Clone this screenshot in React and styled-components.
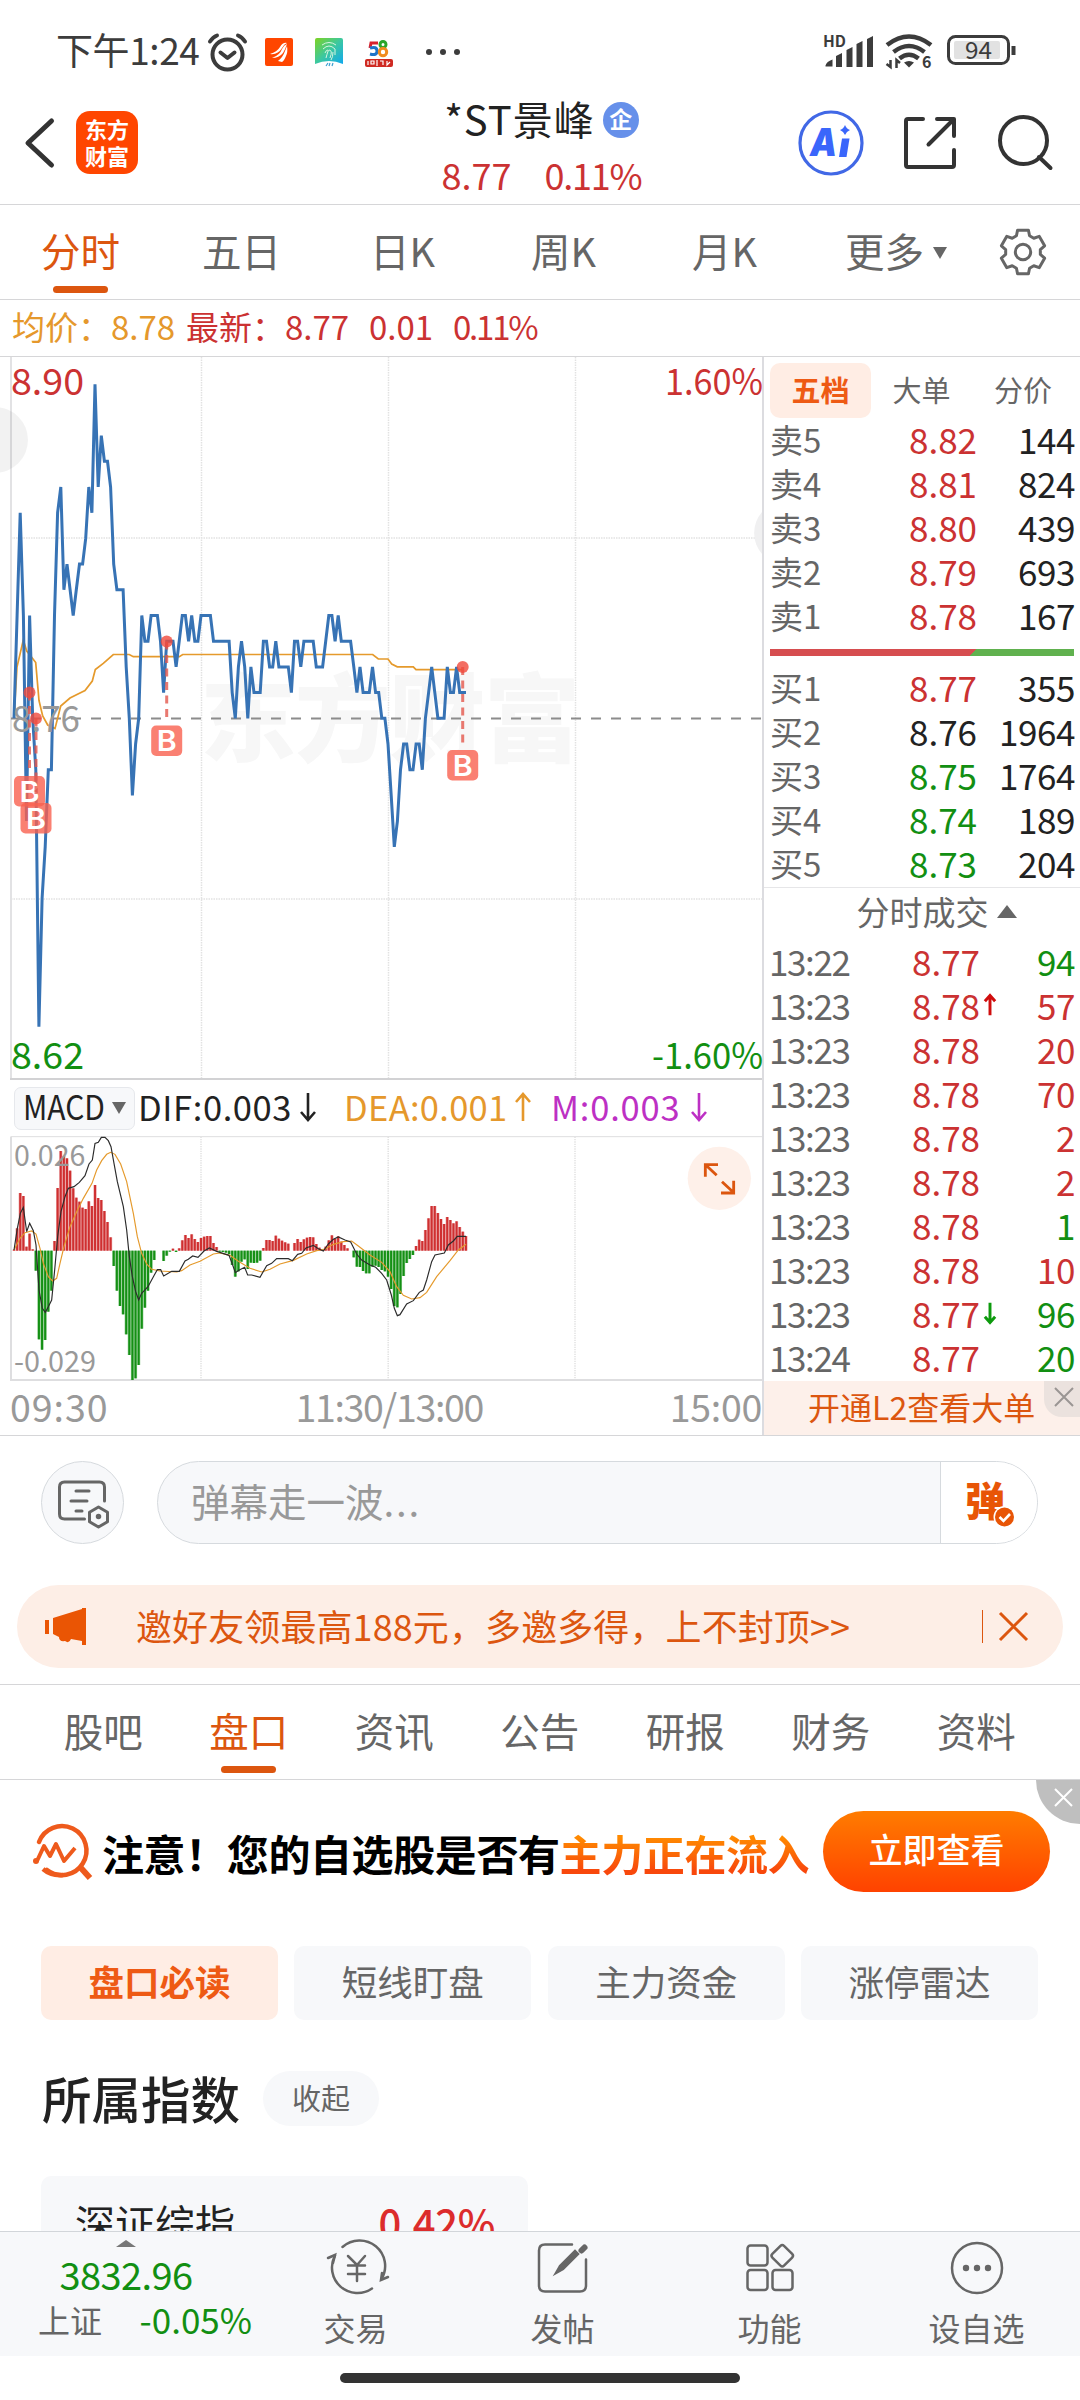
import React, { useState } from 'react';
import styled, { createGlobalStyle } from 'styled-components'

const RED = '#cb3232';
const GREEN = '#128f12';
const ORANGE = '#dc560f';
const GREY = '#666';
const LINE = '#d6d6d8';

const GlobalStyle = createGlobalStyle`
  * { box-sizing: border-box; }
  body {
    margin: 0;
    background: #fff;
    font-family: "Noto Sans CJK SC", "Noto Sans", sans-serif;
    color: #222;
  }
  svg { display: block; flex: none; overflow: visible; }
`

const Page = styled.div`
  width: 1080px;
  height: 2400px;
  overflow: hidden;
  display: flex;
  flex-direction: column;
  background: #fff;
`

const T = styled.span`
  font-size: ${p => p.$size || 36}px;
  color: ${p => p.$color || 'inherit'};
  font-weight: ${p => p.$weight || 400};
  letter-spacing: ${p => p.$ls || 0}px;
  line-height: 1;
  white-space: nowrap;
`

/* ---------- status bar ---------- */

const StatusBar = styled.div`
  height: 96px;
  padding: 8px 62px 0 56px;
  display: flex;
  align-items: center;
  color: #3c3c3c;
  flex: none;
`

const StatusText = styled(T)`
  width: 145px;
  margin-top: -6px;
`

const Spacer = styled.div`
  flex: 1;
`

const StatusIcons = () => (
  <svg width="260" height="48" viewBox="200 28 260 48" fill="none">
    <g stroke="#3c3c3c" strokeWidth="4" strokeLinecap="round">
      <circle cx="226.500" cy="54.500" r="15" />
      <path d="M219.500 52.500l7 5.500 7-5.500M209 41.500q3-4.500 7-6M244 41.500q-3-4.500-7-6" strokeLinejoin="round" />
    </g>
    <rect x="264" y="38" width="28" height="28" rx="2" fill="#ff4600" />
    <path d="M269 54q7-2 10-7 3-5 7-4-3 1-5 5-4 7-12 6zM271 58q8-3 10-9 2-4 5-5-2 6-4 9-4 5-11 5zM277 61q5-4 7-10l2-5q1 6-1 10-2 5-4 6z" fill="#fff" />
    <defs>
      <linearGradient id="fp" x1="0" y1="0" x2="1" y2="1">
        <stop offset="0" stopColor="#7ed321" />
        <stop offset="0.5" stopColor="#3cc8a0" />
        <stop offset="1" stopColor="#10a8ee" />
      </linearGradient>
    </defs>
    <path d="M316 38h24q2 0 2 2v24q-14-6-28 0V40q0-2 2-2z" fill="url(#fp)" />
    <path d="M321 45q7-5 14 0M322 49q6-6 12 0v6M325 58q2-8 3-8 4 0 1 8M324 53q1-3 3-3M332 52q0 5-2 8" stroke="#d8f5e0" strokeWidth="1" />
    <path d="M325 66l2-3M328 66l1-3M332 63l-1 3" stroke="#3a9fd0" strokeWidth="1.200" />
    <path d="M377 43h-7l-1 5" stroke="#d8212c" strokeWidth="3" />
    <path d="M369 48q7-2 7 3t-7 3" stroke="#1e73c8" strokeWidth="3" />
    <circle cx="382" cy="44.500" r="3" stroke="#2aa52a" strokeWidth="3" />
    <circle cx="382" cy="52" r="3.700" stroke="#f08c1e" strokeWidth="3" />
    <rect x="364" y="59" width="28" height="8" rx="2" fill="#cf2a22" />
    <path d="M367 61v4M370 61h3v3h-3zM376 60v6M379 61h3v4M386 61v4l3-3" stroke="#fff" strokeWidth="1.200" />
    <g fill="#3c3c3c">
      <circle cx="428" cy="52" r="3" />
      <circle cx="442" cy="52" r="3" />
      <circle cx="456" cy="52" r="3" />
    </g>
  </svg>
)

const SignalIcons = () => (
  <svg width="196" height="44" viewBox="824 32 196 44" fill="none">
    <text x="825" y="48.500" fontSize="15.500" fontWeight="700" fill="#3c3c3c" textLength="23" lengthAdjust="spacingAndGlyphs">HD</text>
    <g fill="#3c3c3c">
      <path d="M827.500 67.500q1-4 7-6v7h-7zM838 58l6-3v14h-6zM848.500 52l6-3v20h-6zM858.500 46l6-3v26h-6zM869 41l6-3v31h-6z" />
      <path d="M906 64.500q5-3 10 0l-5 5z" />
    </g>
    <g stroke="#3c3c3c" strokeWidth="4.500">
      <path d="M889 47q22-17 44 0M895.500 54q15.500-12 31 0M901.500 60.500q9.500-7.500 19 0" />
    </g>
    <path d="M892.500 62v7l-4-3M898.500 70v-8l3.500 3" stroke="#3c3c3c" strokeWidth="2.500" />
    <text x="924" y="70" fontSize="16" fontWeight="700" fill="#3c3c3c">6</text>
    <rect x="950.500" y="38.500" width="60" height="27" rx="7" stroke="#3c3c3c" strokeWidth="3" />
    <rect x="956" y="43" width="46" height="18" rx="2" fill="#e2e2e2" />
    <path d="M1015.500 48v9" stroke="#3c3c3c" strokeWidth="4" />
    <text x="967" y="61" fontSize="24" fill="#3c3c3c" textLength="27" lengthAdjust="spacingAndGlyphs">94</text>
  </svg>
)

/* ---------- header ---------- */

const Header = styled.header`
  height: 109px;
  flex: none;
  display: grid;
  grid-template-columns: 76px 62px 1fr 66px 134px 82px;
  grid-template-rows: 93px;
  align-items: center;
  border-bottom: 1px solid ${LINE};
`

const Logo = styled.div`
  width: 62px;
  height: 63px;
  border-radius: 14px;
  background: #ff4600;
  color: #fff;
  display: flex;
  flex-direction: column;
  align-items: center;
  justify-content: center;
  font-size: 22px;
  font-weight: 700;
  line-height: 27px;
  padding-bottom: 2px;
`

const TitleBlock = styled.div`
  height: 93px;
  display: flex;
  flex-direction: column;
  align-items: center;
  margin-left: 147px;
`

const TitleRow = styled.div`
  height: 44px;
  flex: none;
  display: flex;
  align-items: center;
  gap: 8px;
`

const Badge = styled.span`
  width: 36px;
  height: 36px;
  margin-top: 4px;
  border-radius: 50%;
  background: #6690ea;
  color: #fff;
  font-size: 23px;
  font-weight: 700;
  line-height: 33px;
  text-align: center;
`

const QuoteRow = styled.div`
  height: 58px;
  margin-top: 5px;
  flex: none;
  display: flex;
  align-items: center;
  gap: 33px;
  color: ${RED};
`

const BackIcon = () => (
  <svg width="76" height="64" viewBox="0 111 76 64" fill="none">
    <path d="M51.500 121L28 143l23.500 22" stroke="#333" strokeWidth="5" strokeLinecap="round" strokeLinejoin="round" />
  </svg>
)

const AiIcon = () => (
  <svg width="66" height="68" viewBox="798 109 66 68" fill="none">
    <circle cx="831" cy="143" r="31" stroke="#4168e6" strokeWidth="3.200" />
    <text x="810" y="156" fontSize="38" fontWeight="900" fontStyle="italic" fontFamily="Inter, sans-serif" fill="#3a66fb" textLength="27" lengthAdjust="spacingAndGlyphs">A</text>
    <path d="M842 138.500h7.500l-3 18.500h-7.500z" fill="#3a66fb" />
    <path d="M845 125q1.500 4 5 5-3.500 1.500-5 5-1.500-3.500-5-5 3.500-1 5-5z" fill="#3a66fb" />
  </svg>
)

const ShareIcon = () => (
  <svg width="134" height="64" viewBox="864 111 134 64" fill="none" stroke="#333" strokeWidth="4" strokeLinecap="round" strokeLinejoin="round">
    <path d="M923 119h-15q-2 0-2 2v44q0 2 2 2h44q2 0 2-2v-15" />
    <path d="M937 119h17v17M953 120l-24.500 24.500" />
  </svg>
)

const SearchIcon = () => (
  <svg width="56" height="64" viewBox="998 111 56 64" fill="none" stroke="#333" strokeWidth="4">
    <circle cx="1023.500" cy="140.500" r="23.500" />
    <path d="M1039 157l11.500 11" strokeLinecap="round" />
  </svg>
)

/* ---------- tabs ---------- */

const TabBar = styled.nav`
  height: ${p => p.$h}px;
  padding: 0 ${p => p.$pad || 0}px;
  flex: none;
  display: flex;
  border-top: ${p => (p.$ruled ? `1px solid ${LINE}` : 'none')};
  border-bottom: 1px solid ${LINE};
`

const Tab = styled.div`
  width: ${p => p.$w}px;
  display: flex;
  flex-direction: column;
  align-items: center;
  font-size: 39.5px;
  line-height: 90px;
  color: ${p => (p.$on ? ORANGE : GREY)};
  &::after {
    content: '';
    width: 55px;
    height: 7px;
    margin-top: -9px;
    border-radius: 4px;
    background: ${p => (p.$on ? ORANGE : 'transparent')};
  }
`

const MoreTab = styled.div`
  width: 178px;
  padding-left: 40px;
  display: flex;
  gap: 9px;
  font-size: 39.5px;
  line-height: 90px;
  color: ${GREY};

  i {
    margin-top: 42px;
  }
`

const Triangle = styled.i`
  width: 0;
  height: 0;
  border-left: ${p => p.$w / 2}px solid transparent;
  border-right: ${p => p.$w / 2}px solid transparent;
  ${p => (p.$up ? 'border-bottom' : 'border-top')}: ${p => p.$h}px solid ${p => p.$color || GREY};
`

const gearPath = () => {
  const pts = [];
  for (let i = 0; i < 6; i++) {
    [[-22, 17.5], [-14, 22.5], [14, 22.5], [22, 17.5]].forEach(([a, r]) => {
      const rad = ((i * 60 + a - 90) * Math.PI) / 180;
      pts.push(`${(24 + r * Math.cos(rad)).toFixed(2)} ${(24 + r * Math.sin(rad)).toFixed(2)}`)
    })
  }
  return `M${pts.join('L')}Z`;
}

const GearIcon = () => (
  <svg width="80" height="94" viewBox="-16 -23 80 94" fill="none" stroke="#666" strokeWidth="3">
    <path d={gearPath()} strokeLinejoin="round" />
    <circle cx="24" cy="24" r="7.700" />
  </svg>
)

/* ---------- price strip ---------- */

const PriceStrip = styled.div`
  height: 57px;
  padding: 0 0 3px 12px;
  flex: none;
  display: flex;
  align-items: center;
  border-bottom: 1px solid ${LINE};
`

const StripCell = styled.span`
  width: ${p => p.$w}px;
  font-size: 33px;
  line-height: 1;
  letter-spacing: ${p => p.$ls || 0}px;
  white-space: nowrap;
  color: ${p => p.$color || RED};
`

/* ---------- chart ---------- */

const Market = styled.section`
  height: 1079px;
  flex: none;
  display: flex;
  border-bottom: 1px solid ${LINE};
`

const ChartColumn = styled.div`
  width: 764px;
  border-right: 2px solid #dcdce0;
  display: flex;
  flex-direction: column;
`

const MacdBar = styled.div`
  height: 57px;
  padding-left: 14px;
  display: flex;
  align-items: center;
`

const MacdButton = styled.div`
  width: 121px;
  height: 43px;
  margin-right: 3px;
  padding: 0 8px 0 8px;
  border: 1px solid #e6e8ec;
  border-radius: 7px;
  background: #f7f8fa;
  display: flex;
  align-items: center;
  justify-content: space-between;
`

const MacdValue = styled.div`
  width: ${p => p.$w}px;
  height: 54px;
  padding-bottom: 3px;
  display: flex;
  align-items: center;
  justify-content: space-between;
  margin-right: ${p => p.$gap}px;
  color: ${p => p.$color};
`

const TimeAxis = styled.div`
  height: 54px;
  padding: 0 0 5px 10px;
  display: flex;
  align-items: center;
  justify-content: space-between;
  color: #999;
`

// minute prices, in cents above or below yesterday's close
const PRICES = [
  0, 4, 8, 4, -4, 4, 0, -2, -12, -7, -5, -2, -2, 4, 8, 9, 5, 6, 5, 4, 5, 6, 6, 7, 9, 8, 13, 9, 11, 10,
  10, 9, 6, 5, 5, 5, 2, 0, -3, -1, 0, 4, 3, 3, 4, 4, 4, 3, 1, 3, 3, 3, 2, 3, 4, 4, 3, 4, 3, 3,
  4, 4, 4, 4, 3, 3, 3, 3, 3, 3, 1, 0, 2, 3, 2, 0, 2, 1, 1, 1, 3, 3, 2, 2, 3, 2, 2, 2, 2, 1,
  3, 3, 2, 3, 3, 3, 3, 2, 2, 2, 3, 4, 4, 3, 4, 3, 3, 3, 3, 2, 1, 2, 1, 1, 1, 2, 1, 1, 0, 0,
  -1, -3, -5, -4, -2, -1, -1, -2, -2, -1, -1, -2, 0, 1, 2, 1, 0, 0, 0, 2, 1, 1, 2, 1, 1, 1,
];

const AVERAGE = '14,718 17,667 23.3,640 26.7,651 30.7,656 35.7,662.5 39,700.5 42.7,716 47.7,725 55,728.6 60.7,706 70,698 80,693 85,690.6 92.3,681 95.3,669.6 103.3,663.4 113.3,654.5 129.3,654.5 133.3,656.7 179.3,656.7 182.7,654.5 372.7,654.5 378.3,659 388,659 391.7,664 397.3,666.8 413.3,666.8 416,669.6 462,669.6';

const BUYS = [
  { x: 29.5, dot: 692.5, box: 776 },
  { x: 36, dot: 718.5, box: 803 },
  { x: 166.7, dot: 641.5, box: 725.5 },
  { x: 462.7, dot: 667, box: 750 },
];

const PriceChart = () => {
  const line = PRICES.map((v, i) => `${(14 + i * 3.117).toFixed(1)},${(718.3 - v * 25.7).toFixed(1)}`).join(' ');
  return (
    <svg width="762" height="723" viewBox="0 357 762 723" fill="none">
      <text x="200" y="754" fontSize="96" fontWeight="900" fill="#f7f7f7" textLength="380">东方财富</text>
      <g stroke="#e2e2e2" strokeWidth="1.500" strokeDasharray="1.500 1">
        <path d="M201.500 357v722M388.500 357v722M575.500 357v722M11 538h751M11 899h751" />
      </g>
      <path d="M11 357v722" stroke="#e2e2e4" strokeWidth="2" />
      <path d="M10 1079h752" stroke="#d2d2d4" strokeWidth="2" />
      <circle cx="-5" cy="440" r="33" fill="#000" fillOpacity="0.05" />
      <path d="M762 512a32 32 0 0 0 0 42z" fill="#f0f0f1" />
      <path d="M11 718.500h750" stroke="#8c8c8c" strokeWidth="2" strokeDasharray="10 10" />
      <polyline points={AVERAGE} stroke="#e59a2c" strokeWidth="1.700" />
      <polyline points={line} stroke="#3773b5" strokeWidth="3" />
      <text x="12" y="732" fontSize="37" fill="#999" textLength="68" lengthAdjust="spacingAndGlyphs">8.76</text>
      {BUYS.map(b => (
        <g key={b.x}>
          <path d={`M${b.x} ${b.dot}V${b.box - 4}`} stroke="#e4574c" strokeOpacity="0.8" strokeWidth="3" strokeDasharray="8 5.500" />
          <circle cx={b.x} cy={b.dot} r="6" fill="#f04a3c" fillOpacity="0.8" />
          <rect x={b.x - 15.5} y={b.box} width="31" height="30.500" rx="5" fill="#f9604f" fillOpacity="0.8" />
          <text x={b.x - 10} y={b.box + 25.5} fontSize="28" fontWeight="600" fill="#fff" fontFamily="Inter, sans-serif" textLength="20" lengthAdjust="spacingAndGlyphs">B</text>
        </g>
      ))}
      <g fontSize="37">
        <text x="11" y="395" fill={RED} textLength="73" lengthAdjust="spacingAndGlyphs">8.90</text>
        <text x="665" y="395" fill={RED} textLength="98" lengthAdjust="spacingAndGlyphs">1.60%</text>
        <text x="11" y="1069" fill={GREEN} textLength="73" lengthAdjust="spacingAndGlyphs">8.62</text>
        <text x="652" y="1069" fill={GREEN} textLength="111" lengthAdjust="spacingAndGlyphs">-1.60%</text>
      </g>
    </svg>
  )
}

const MACD_BARS = [
  3, 67, 173, 164, 12, 51, 4, -60, -266, -297, -268, -183, -120, 29, 188, 299, 284, 277, 240, 187, 159, 147, 129, 125, 148, 134, 197, 158, 152, 119,
  86, 40, -46, -120, -166, -191, -251, -313, -388, -383, -343, -234, -171, -120, -66, -28, 0, 0, -31, -15, -3, 6, -4, 7, 31, 47, 38, 49, 35, 26,
  38, 42, 44, 44, 23, 11, -3, -4, -6, -10, -43, -78, -62, -33, -26, -55, -36, -37, -36, -30, 8, 32, 32, 29, 45, 36, 30, 25, 21, 0,
  23, 35, 26, 34, 39, 41, 40, 20, 9, 2, 12, 31, 46, 35, 43, 27, 17, 7, 0, -20, -48, -49, -61, -68, -68, -48, -45, -49, -58, -62,
  -78, -115, -166, -170, -130, -76, -37, -25, -13, 14, 33, 29, 62, 97, 134, 134, 113, 95, 80, 101, 92, 82, 88, 71, 57, 44,
];

const DIF = '42,570 52,505 61,460 70,442 80,515 89,490 100,512 108,555 117,690 127,745 136,757 145,740 155,720 164,630 173,530 183,455 195,410 205,385 222,380 238,367 255,347 267,312 277,300 285,250 295,247 304,232 315,232 325,242 333,260 342,310 352,365 370,440 380,510 388,590 397,650 407,695 416,720 425,700 444,680 463,645 472,629 482,629 491,648 515,634 538,634 555,603 565,598 578,588 594,592 612,573 628,564 650,574 687,586 697,612 706,638 718,630 734,622 743,645 755,645 780,652 800,617 815,610 830,596 865,596 877,602 893,583 905,580 918,564 940,556 955,566 970,573 985,552 1000,538 1015,531 1035,540 1052,546 1070,582 1085,600 1110,615 1127,622 1145,640 1160,660 1174,705 1183,745 1192,767 1200,764 1220,732 1240,722 1258,697 1270,690 1280,660 1295,605 1305,585 1333,579 1345,555 1360,543 1372,529 1398,529';

const DEA = '42,570 60,535 75,518 95,513 108,522 120,565 130,610 145,650 158,663 170,655 180,610 192,560 210,500 230,455 250,415 276,370 290,330 305,302 320,283 332,277 345,283 362,312 380,365 400,460 412,530 425,580 440,612 455,628 480,633 530,636 545,632 570,615 600,604 640,582 660,579 690,586 715,604 750,625 785,636 810,628 840,612 880,601 920,582 950,572 975,567 1000,553 1030,545 1055,543 1075,558 1110,585 1145,607 1170,635 1190,680 1210,706 1235,717 1260,713 1280,697 1310,650 1350,602 1375,570 1398,553';

const MacdChart = () => (
  <svg width="762" height="245" viewBox="0 228 2286 735" fill="none">
    <path d="M603 230v730M1164.500 230v730M1725 230v730" stroke="#dedede" strokeWidth="4" strokeDasharray="4 3" />
    <path d="M32 230h2254" stroke="#dededf" strokeWidth="3" />
    <path d="M33 230v730M30 960h2256" stroke="#dedee0" strokeWidth="6" />
    {MACD_BARS.map((v, i) => {
      const x = 42 + i * 9.35;
      const y = v > 0 ? 572 - v : 572;
      return (
        <g key={i} fill={v > 0 ? '#cf2f30' : '#149014'}>
          <rect x={x - 4.7} y={y} width="9.400" height={Math.abs(v)} fillOpacity="0.45" />
          <rect x={x - 3} y={y} width="6" height={Math.abs(v)} />
        </g>
      )
    })}
    <text x="42" y="318" fontSize="86" fill="#999" textLength="214" lengthAdjust="spacingAndGlyphs">0.026</text>
    <text x="42" y="936" fontSize="86" fill="#999" textLength="246" lengthAdjust="spacingAndGlyphs">-0.029</text>
    <polyline points={DEA} stroke="#e59a2c" strokeWidth="3.500" />
    <polyline points={DIF} stroke="#2c2c2c" strokeWidth="3.500" />
    <circle cx="2158" cy="355" r="95" fill="#fef0e9" />
    <path d="M2116 350v-36h38M2118 316l32 30M2166 365l34 32M2201 362v37h-38" stroke={ORANGE} strokeWidth="8.500" />
  </svg>
)

const ThinArrow = ({ up, color, w = 16, h = 30, sw = 2.6 }) => (
  <svg width={w} height={h} viewBox="0 0 16 30" fill="none" stroke={color} strokeWidth={sw}>
    <path d={up ? 'M8 29V3M1 10l7-8 7 8' : 'M8 1v26M1 20l7 8 7-8'} />
  </svg>
)

/* ---------- order book ---------- */

const BookColumn = styled.div`
  width: 316px;
  display: flex;
  flex-direction: column;
`

const BookTabs = styled.div`
  height: 62px;
  padding: 6px 6px 0;
  display: grid;
  grid-template-columns: 101px 101px 102px;
`

const BookTab = styled.div`
  height: 55px;
  border-radius: 10px;
  background: ${p => (p.$on ? '#ffede4' : 'none')};
  color: ${p => (p.$on ? '#ee5a14' : GREY)};
  font-weight: ${p => (p.$on ? 700 : 400)};
  font-size: 29px;
  line-height: 52px;
  text-align: center;
`

const Quote = styled.div`
  height: 44.1px;
  padding-left: ${p => (p.$trade ? 5 : 6)}px;
  display: grid;
  grid-template-columns: ${p => (p.$trade ? '90px 121px 21px 74px' : '90px 117px 98px')};
  align-items: center;
  font-size: 35px;
  line-height: 40px;
  padding-bottom: 4px;
`

const QuoteLabel = styled.span`
  font-size: ${p => p.$size || 33}px;
  letter-spacing: ${p => p.$ls || 0}px;
  color: ${GREY};
`

const QuoteNum = styled.span`
  text-align: right;
  letter-spacing: ${p => p.$ls || 0}px;
  color: ${p => p.$color || '#222'};
`

const RatioBar = styled.div`
  height: 7px;
  margin: 10px 6px 11px;
  background: linear-gradient(135deg, #d64d4f 0 66.5%, #60b14e 66.5%);
`

const TradeHead = styled.div`
  height: 54px;
  border-top: 1px solid #e6e6e8;
  display: flex;
  align-items: center;
  justify-content: center;
  gap: 8px;
  padding: 0 0 5px 29px;
  color: ${GREY};
`

const L2Banner = styled.div`
  height: 54px;
  margin-top: auto;
  background: #fdf0ea;
  display: flex;
  justify-content: space-between;
  padding-left: 44px;
  color: ${ORANGE};
  font-size: 32px;
  line-height: 50px;
`

const CloseCorner = styled.span`
  width: ${p => p.$s}px;
  height: ${p => p.$s}px;
  border-bottom-left-radius: ${p => p.$r}px;
  background: ${p => p.$bg};
  display: flex;
  align-items: center;
  justify-content: center;
  padding: ${p => p.$pad};
`

const Cross = ({ size, color, sw }) => (
  <svg width={size} height={size} viewBox={`0 0 ${size} ${size}`} stroke={color} strokeWidth={sw}>
    <path d={`M1 1L${size - 1} ${size - 1}M${size - 1} 1L1 ${size - 1}`} />
  </svg>
)

const ASKS = [
  ['卖5', '8.82', '144'], ['卖4', '8.81', '824'], ['卖3', '8.80', '439'], ['卖2', '8.79', '693'], ['卖1', '8.78', '167'],
];
const BIDS = [
  ['买1', '8.77', '355', RED], ['买2', '8.76', '1964', '#222'], ['买3', '8.75', '1764', GREEN], ['买4', '8.74', '189', GREEN], ['买5', '8.73', '204', GREEN],
];
const TRADES = [
  ['13:22', '8.77', '', '94', GREEN], ['13:23', '8.78', 'up', '57', RED], ['13:23', '8.78', '', '20', RED],
  ['13:23', '8.78', '', '70', RED], ['13:23', '8.78', '', '2', RED], ['13:23', '8.78', '', '2', RED],
  ['13:23', '8.78', '', '1', GREEN], ['13:23', '8.78', '', '10', RED], ['13:23', '8.77', 'down', '96', GREEN],
  ['13:24', '8.77', '', '20', GREEN],
];

function makeQuote(q) {
  return (
    <Quote key={q[0]}>
      <QuoteLabel>{q[0]}</QuoteLabel>
      <QuoteNum $color={q[3] || RED}>{q[1]}</QuoteNum>
      <QuoteNum $ls={-0.4}>{q[2]}</QuoteNum>
    </Quote>
  )
}

/* ---------- comment bar and promo ---------- */

const CommentRow = styled.div`
  height: 149px;
  padding: 25px 42px 0 41px;
  flex: none;
  display: flex;
  gap: 33px;
`

const RoundButton = styled.div`
  width: 83px;
  height: 83px;
  border-radius: 50%;
  border: 1.5px solid #d6dade;
  background: #f7f8fa;
`

const CommentBox = styled.div`
  flex: 1;
  height: 83px;
  border: 1.5px solid #d6dade;
  border-radius: 42px;
  background: #f7f8fa;
  display: flex;
  overflow: hidden;
  padding-left: 33px;
  font-size: 38.5px;
  line-height: 76px;
  color: #999;
`

const Dots = styled.span`
  letter-spacing: 1.8px;
`

const DanmuButton = styled.div`
  width: 97px;
  margin-left: auto;
  border-left: 1.5px solid #d6dade;
  background: #fff;
`

const Promo = styled.div`
  height: 83px;
  margin: 0 17px 16px;
  flex: none;
  border-radius: 42px;
  background: #fdeee6;
  display: flex;
  align-items: center;
  color: ${ORANGE};
`

const PromoText = styled(T)`
  width: 815px;
  margin-top: -4px;
`

const PromoClose = styled.div`
  border-left: 1.5px solid ${ORANGE};
  height: 33px;
  margin-left: auto;
  margin-right: 35px;
  padding: 2px 0 0 16px;
`

const NoteIcon = () => (
  <svg width="80" height="80" viewBox="42 1462 80 80" fill="none" stroke="#666" strokeWidth="3" strokeLinecap="round">
    <path d="M104.500 1501v-14q0-5-5-5h-35q-5 0-5 5v27q0 5 5 5h20" />
    <path d="M76 1491h13M71 1501h16M76 1511h6" />
    <path d="M98.500 1507l9 5.200v9.600l-9 5.200-9-5.200v-9.600z" strokeLinejoin="round" />
    <circle cx="98.500" cy="1516.500" r="2" fill="#666" strokeWidth="1.500" />
  </svg>
)

const DanmuIcon = () => (
  <svg width="96" height="80" viewBox="941 1462 96 80">
    <text x="965" y="1516" fontSize="40" fontWeight="900" fill="#e85506">弹</text>
    <circle cx="1004.500" cy="1517" r="11" fill="#fff" />
    <circle cx="1004.500" cy="1517" r="9.500" fill="#e85506" />
    <path d="M999.500 1517l4 4 6.500-7" fill="none" stroke="#fff" strokeWidth="2.600" />
  </svg>
)

const HornIcon = () => (
  <svg width="119" height="83" viewBox="17 1585 119 83" fill="#ea5504">
    <path d="M45 1620h4v14h-4zM53 1618l29-9v-1h4v37h-4v-4l-11-2q-2 5-6 2-6 1-6-4l-6-3z" />
  </svg>
)

/* ---------- ad ---------- */

const Ad = styled.div`
  height: 166px;
  flex: none;
  display: flex;
  align-items: flex-start;
`

const AdText = styled.div`
  width: 721px;
  padding-top: 43px;
  font-size: 42px;
  font-weight: 700;
  line-height: 60px;
  letter-spacing: -0.4px;
  white-space: nowrap;
  color: #000;
`

const AdHot = styled.span`
  background: linear-gradient(#ff8a00 25%, #f8480c 80%);
  background-clip: text;
  -webkit-background-clip: text;
  color: transparent;
`

const AdButton = styled.div`
  width: 227px;
  height: 81px;
  margin-top: 31px;
  border-radius: 41px;
  background: linear-gradient(#ff7c00, #ff4200);
  color: #fff;
  font-size: 34px;
  font-weight: 500;
  line-height: 76px;
  text-align: center;
`

// sits over the top right corner of the ad
const AdClose = styled.div`
  margin-left: -14px;
`

const AdIcon = () => (
  <svg width="102" height="120" viewBox="0 1780 102 120" fill="none" stroke="#ee5a1c" strokeWidth="4.500">
    <path d="M39 1842A24.500 24.500 0 1 1 47 1870" strokeLinecap="round" />
    <path d="M43 1869q8 7 20 6" />
    <path d="M81 1868l9 10" strokeWidth="6" />
    <path d="M37 1861l7-15 6 10 6-12 8 17 11-13" strokeWidth="4" strokeLinejoin="round" />
    <circle cx="36" cy="1861" r="3" fill="#ee5a1c" stroke="none" />
  </svg>
)

/* ---------- index section ---------- */

const Chips = styled.div`
  height: 74px;
  padding: 0 42px 0 41px;
  flex: none;
  display: grid;
  grid-template-columns: repeat(4, 1fr);
  gap: 16.5px;
`

const Chip = styled.div`
  border-radius: 10px;
  background: ${p => (p.$on ? '#ffede4' : '#f7f8fa')};
  color: ${p => (p.$on ? '#ee5a14' : GREY)};
  font-weight: ${p => (p.$on ? 700 : 400)};
  font-size: 35.5px;
  line-height: 70px;
  text-align: center;
`

const SectionHead = styled.div`
  height: 156px;
  padding: 0 42px;
  flex: none;
  display: flex;
  align-items: center;
  gap: 23px;
`

const FoldPill = styled.div`
  width: 116px;
  height: 55px;
  border-radius: 28px;
  background: #f7f8fa;
  color: ${GREY};
  font-size: 29px;
  line-height: 52px;
  text-align: center;
`

const IndexClip = styled.div`
  height: 55px;
  flex: none;
  overflow: hidden;
  padding-left: 41px;
`

const IndexCard = styled.div`
  width: 487px;
  height: 150px;
  padding: 26px 33px 0 34px;
  border-radius: 10px;
  background: #f7f8fa;
  display: flex;
  justify-content: space-between;
`

/* ---------- bottom bar ---------- */

const BottomBar = styled.footer`
  height: 125px;
  flex: none;
  border-top: 1px solid #d2d6da;
  background: #f7f8fa;
  display: grid;
  grid-template-columns: 252px repeat(4, 207px);
`

const IndexTicker = styled.div`
  padding-top: 8px;
  display: flex;
  flex-direction: column;
  align-items: center;
  color: ${GREEN};
`

const TickerValue = styled(T)`
  margin-top: 8px;
`

const TickerRow = styled.div`
  width: 252px;
  padding-left: 38px;
  margin-top: 8px;
  display: flex;
  align-items: center;
  justify-content: space-between;
`

const NavItem = styled.div`
  padding-top: 8px;
  display: flex;
  flex-direction: column;
  align-items: center;
  gap: 12px;
  font-size: 32px;
  line-height: 38px;
  color: ${GREY};
`

const HomeArea = styled.div`
  flex: 1;
  display: flex;
  justify-content: center;
  padding-top: 17px;
`

const HomePill = styled.div`
  width: 400px;
  height: 10px;
  border-radius: 5px;
  background: #333;
`

const TradeIcon = () => (
  <svg width="66" height="56" viewBox="322 2240 66 56" fill="none" stroke="#666" strokeWidth="2.500" strokeLinecap="round">
    <path d="M341.500 2247a25.500 25.500 0 0 1 39 32M371 2288.500a25.500 25.500 0 0 1-37-33" />
    <path d="M327 2258l7-3-2 8M387 2277l-7 3 1-7M347 2256l9 9 8-9M356 2265v16M347 2265.500h17M347 2274h17" />
  </svg>
)

const PostIcon = () => (
  <svg width="52" height="56" viewBox="536 2240 52 56" fill="none" stroke="#666" strokeWidth="2.500" strokeLinecap="round">
    <path d="M571 2244.500h-27q-6 0-6 6v35q0 6 6 6h35q6 0 6-6v-26" />
    <path d="M555 2273l4-7 15-15 3 3-15 15z" fill="#666" />
    <path d="M580.500 2250.500l3-3" strokeWidth="6" />
  </svg>
)

const GridIcon = () => (
  <svg width="52" height="56" viewBox="743 2240 52 56" fill="none" stroke="#666" strokeWidth="2.500">
    <rect x="746.500" y="2245.500" width="20" height="20" rx="3" />
    <rect x="746.500" y="2270" width="20" height="20" rx="3" />
    <rect x="771.500" y="2270" width="20" height="20" rx="3" />
    <rect x="773" y="2247.500" width="16.500" height="16.500" rx="2.500" transform="rotate(45 781.25 2255.75)" />
  </svg>
)

const MoreIcon = () => (
  <svg width="54" height="56" viewBox="949 2240 54 56" fill="none" stroke="#666" strokeWidth="2.500">
    <circle cx="976" cy="2268" r="25" />
    <g fill="#666" stroke="none">
      <circle cx="965" cy="2268" r="3.200" />
      <circle cx="976" cy="2268" r="3.200" />
      <circle cx="987" cy="2268" r="3.200" />
    </g>
  </svg>
)

const App = () => {
  const [period, setPeriod] = useState('分时');
  const [section, setSection] = useState('盘口');
  const [chip, setChip] = useState('盘口必读');

  return (
    <Page>
      <GlobalStyle />

      <StatusBar>
        <StatusText $size={37} $ls={-0.4}>下午1:24</StatusText>
        <StatusIcons />
        <Spacer />
        <SignalIcons />
      </StatusBar>

      <Header>
        <BackIcon />
        <Logo>
          <span>东方</span>
          <span>财富</span>
        </Logo>
        <TitleBlock>
          <TitleRow>
            <T $size={40} $color="#222" $ls={1}>*ST景峰</T>
            <Badge>企</Badge>
          </TitleRow>
          <QuoteRow>
            <T $size={36}>8.77</T>
            <T $size={36} $ls={-1.2}>0.11%</T>
          </QuoteRow>
        </TitleBlock>
        <AiIcon />
        <ShareIcon />
        <SearchIcon />
      </Header>

      <TabBar $h={95}>
        {['分时', '五日', '日K', '周K', '月K'].map(t => (
          <Tab key={t} $w={161} $on={period === t} onClick={() => setPeriod(t)}>{t}</Tab>
        ))}
        <MoreTab>更多<Triangle $w={15} $h={12} /></MoreTab>
        <GearIcon />
      </TabBar>

      <PriceStrip>
        <StripCell $w={99} $color="#e5982c">均价：</StripCell>
        <StripCell $w={75} $color="#e5982c">8.78</StripCell>
        <StripCell $w={99}>最新：</StripCell>
        <StripCell $w={84}>8.77</StripCell>
        <StripCell $w={84}>0.01</StripCell>
        <StripCell $w={90} $ls={-2.2}>0.11%</StripCell>
      </PriceStrip>

      <Market>
        <ChartColumn>
          <PriceChart />
          <MacdBar>
            <MacdButton>
              <svg width="82" height="38" viewBox="0 0 82 38">
                <text x="0" y="31" fontSize="34" fill="#222" textLength="82" lengthAdjust="spacingAndGlyphs">MACD</text>
              </svg>
              <Triangle $w={14} $h={12} />
            </MacdButton>
            <MacdValue $w={178} $gap={28} $color="#222">
              <T $size={34.5} $ls={0.6}>DIF:0.003</T>
              <ThinArrow color="#222" />
            </MacdValue>
            <MacdValue $w={187} $gap={20} $color="#e5982c">
              <T $size={34.5} $ls={0.3}>DEA:0.001</T>
              <ThinArrow up color="#e5982c" />
            </MacdValue>
            <MacdValue $w={156} $gap={0} $color="#bd30c4">
              <T $size={34.5} $ls={0.8}>M:0.003</T>
              <ThinArrow color="#bd30c4" />
            </MacdValue>
          </MacdBar>
          <MacdChart />
          <TimeAxis>
            <T $size={37.5} $ls={1}>09:30</T>
            <T $size={37.5} $ls={-1.3}>11:30/13:00</T>
            <T $size={37.5} $ls={-0.3}>15:00</T>
          </TimeAxis>
        </ChartColumn>

        <BookColumn>
          <BookTabs>
            <BookTab $on>五档</BookTab>
            <BookTab>大单</BookTab>
            <BookTab>分价</BookTab>
          </BookTabs>
          {ASKS.map(makeQuote)}
          <RatioBar />
          {BIDS.map(makeQuote)}
          <TradeHead>
            <T $size={33}>分时成交</T>
            <Triangle $up $w={20} $h={13} />
          </TradeHead>
          {TRADES.map((t, i) => (
            <Quote key={i} $trade>
              <QuoteLabel $size={35} $ls={-1.4}>{t[0]}</QuoteLabel>
              <QuoteNum $color={RED}>{t[1]}</QuoteNum>
              {t[2] ? <ThinArrow up={t[2] === 'up'} color={t[2] === 'up' ? '#d00d0d' : '#0d9a0d'} w={20} h={22} sw={4} /> : <span />}
              <QuoteNum $color={t[4]} $ls={-0.4}>{t[3]}</QuoteNum>
            </Quote>
          ))}
          <L2Banner>
            开通L2查看大单
            <CloseCorner $s={36} $r={18} $bg="#ebe2de" $pad="0 0 5px 4px">
              <Cross size={20} color="#9a9593" sw={2} />
            </CloseCorner>
          </L2Banner>
        </BookColumn>
      </Market>

      <CommentRow>
        <RoundButton><NoteIcon /></RoundButton>
        <CommentBox>
          弹幕走一波<Dots>...</Dots>
          <DanmuButton><DanmuIcon /></DanmuButton>
        </CommentBox>
      </CommentRow>

      <Promo>
        <HornIcon />
        <PromoText $size={36} $ls={0.1}>邀好友领最高188元，多邀多得，上不封顶&gt;&gt;</PromoText>
        <PromoClose><Cross size={29} color={ORANGE} sw={3} /></PromoClose>
      </Promo>

      <TabBar $h={96} $pad={30.5} $ruled>
        {['股吧', '盘口', '资讯', '公告', '研报', '财务', '资料'].map(t => (
          <Tab key={t} $w={145.5} $on={section === t} onClick={() => setSection(t)}>{t}</Tab>
        ))}
      </TabBar>

      <Ad>
        <AdIcon />
        <AdText>注意！您的自选股是否有<AdHot>主力正在流入</AdHot></AdText>
        <AdButton>立即查看</AdButton>
        <AdClose>
          <CloseCorner $s={44} $r={44} $bg="#bfbfbf" $pad="0 0 10px 10px">
            <Cross size={19} color="#fff" sw={2} />
          </CloseCorner>
        </AdClose>
      </Ad>

      <Chips>
        {['盘口必读', '短线盯盘', '主力资金', '涨停雷达'].map(c => (
          <Chip key={c} $on={chip === c} onClick={() => setChip(c)}>{c}</Chip>
        ))}
      </Chips>

      <SectionHead>
        <T $size={49.5} $weight={500}>所属指数</T>
        <FoldPill>收起</FoldPill>
      </SectionHead>

      <IndexClip>
        <IndexCard>
          <T $size={40}>深证综指</T>
          <T $size={40} $weight={500} $color="#dc2c2c" $ls={-0.3}>0.42%</T>
        </IndexCard>
      </IndexClip>

      <BottomBar>
        <IndexTicker>
          <Triangle $up $w={20} $h={7} $color="#777" />
          <TickerValue $size={38} $ls={-0.6}>3832.96</TickerValue>
          <TickerRow>
            <T $size={32} $color={GREY}>上证</T>
            <T $size={35}>-0.05%</T>
          </TickerRow>
        </IndexTicker>
        <NavItem><TradeIcon />交易</NavItem>
        <NavItem><PostIcon />发帖</NavItem>
        <NavItem><GridIcon />功能</NavItem>
        <NavItem><MoreIcon />设自选</NavItem>
      </BottomBar>

      <HomeArea>
        <HomePill />
      </HomeArea>
    </Page>
  )
}

export default App;
